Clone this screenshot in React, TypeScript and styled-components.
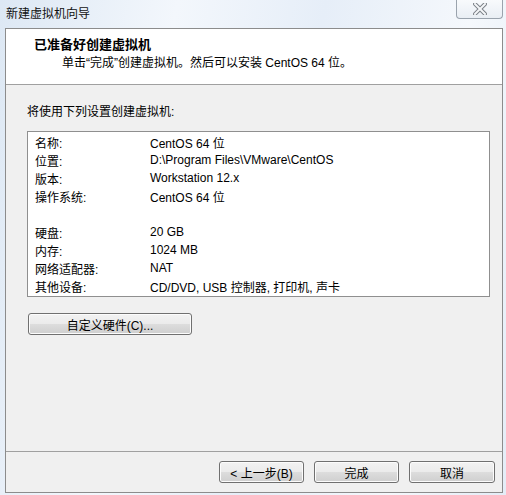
import React from 'react';
import styled, { createGlobalStyle } from 'styled-components';

const GlobalStyle = createGlobalStyle`
  html, body {
    margin: 0;
    padding: 0;
  }
  body {
    width: 506px;
    height: 495px;
    overflow: hidden;
    background: linear-gradient(100deg, #dde8f4 0%, #f3f7fc 30%, #e6eef8 55%, #f5f8fc 80%, #e4edf7 100%);
    font-family: "Liberation Sans", "Noto Sans CJK SC", sans-serif;
    font-size: 12px;
    color: #000;
  }
`;

const Frame = styled.div`
  display: flex;
  flex-direction: column;
  width: 506px;
  height: 495px;
`;

const TitleBar = styled.div`
  height: 28px;
  display: flex;
  align-items: flex-start;
  justify-content: space-between;
`;

const Title = styled.div`
  padding: 7px 0 0 6px;
  line-height: 14px;
  color: #111;
`;

const CloseButton = styled.div`
  width: 45px;
  height: 18px;
  margin-right: 3px;
  border: 1px solid #9aa3ad;
  border-top: none;
  border-radius: 0 0 4px 4px;
  background: linear-gradient(#f8fafc, #e9eef4);
  display: flex;
  align-items: center;
  justify-content: center;
`;

const Client = styled.div`
  margin-left: 5px;
  width: 496px;
  height: 463px;
  border: 1px solid #8c8c8c;
  background: #f0f0f0;
  display: flex;
  flex-direction: column;
`;

const Header = styled.div`
  height: 56px;
  background: #fff;
  border-bottom: 1px solid #a0a0a0;
  padding: 8px 0 0 28px;
  box-sizing: border-box;
`;

const Heading = styled.div`
  font-weight: bold;
  font-size: 13px;
  line-height: 16px;
`;

const Subtitle = styled.div`
  padding-left: 28px;
  line-height: 18px;
  margin-top: 1px;
`;

const Body = styled.div`
  flex: 1;
  padding: 18px 12px 0 21px;
`;

const Intro = styled.div`
  line-height: 18px;
`;

const SummaryBox = styled.div`
  margin-top: 10px;
  height: 166px;
  border: 1px solid #8f8f8f;
  background: #fff;
  padding: 1px 0 0 7px;
  box-sizing: border-box;
  display: grid;
  grid-template-columns: 115px 1fr;
  grid-auto-rows: 18px;
  align-items: center;
`;

const Cell = styled.div`
  white-space: nowrap;
`;

const Button = styled.button<{ $width: number }>`
  width: ${p => p.$width}px;
  height: 22px;
  padding: 0;
  border: 1px solid #707070;
  border-radius: 3px;
  background: linear-gradient(#f2f2f2 0%, #ebebeb 50%, #dddddd 50%, #cfcfcf 100%);
  box-shadow: inset 0 0 0 1px #fcfcfc;
  font-family: "Liberation Sans", "Noto Sans CJK SC", sans-serif;
  font-size: 12px;
  color: #000;
`;

const CustomRow = styled.div`
  margin-top: 16px;
  margin-left: 1px;
`;

const Footer = styled.div`
  height: 41px;
  border-top: 1px solid #a0a0a0;
  display: flex;
  justify-content: flex-end;
  align-items: flex-start;
  gap: 10px;
  padding: 9px 7px 0 0;
  box-sizing: border-box;
`;

const rows: [string, string][] = [
  ['名称:', 'CentOS 64 位'],
  ['位置:', 'D:\\Program Files\\VMware\\CentOS'],
  ['版本:', 'Workstation 12.x'],
  ['操作系统:', 'CentOS 64 位'],
  ['', ''],
  ['硬盘:', '20 GB'],
  ['内存:', '1024 MB'],
  ['网络适配器:', 'NAT'],
  ['其他设备:', 'CD/DVD, USB 控制器, 打印机, 声卡'],
];

const CloseIcon = () => (
  <svg width="14" height="12" viewBox="0 0 14 12">
    <path d="M2 1 L12 11 M12 1 L2 11" stroke="#7a7f86" strokeWidth="4" strokeLinecap="square" />
    <path d="M2 1 L12 11 M12 1 L2 11" stroke="#f4f6f8" strokeWidth="2" strokeLinecap="square" />
  </svg>
);

const App: React.FC = () => {
  return (
    <Frame>
      <GlobalStyle />
      <TitleBar>
        <Title>新建虚拟机向导</Title>
        <CloseButton><CloseIcon /></CloseButton>
      </TitleBar>
      <Client>
        <Header>
          <Heading>已准备好创建虚拟机</Heading>
          <Subtitle>单击“完成”创建虚拟机。然后可以安装 CentOS 64 位。</Subtitle>
        </Header>
        <Body>
          <Intro>将使用下列设置创建虚拟机:</Intro>
          <SummaryBox>
            {rows.map(([label, value], i) => (
              <React.Fragment key={i}>
                <Cell>{label}</Cell>
                <Cell>{value}</Cell>
              </React.Fragment>
            ))}
          </SummaryBox>
          <CustomRow>
            <Button $width={164}>自定义硬件(C)...</Button>
          </CustomRow>
        </Body>
        <Footer>
          <Button $width={85}>&lt; 上一步(B)</Button>
          <Button $width={85}>完成</Button>
          <Button $width={86}>取消</Button>
        </Footer>
      </Client>
    </Frame>
  );
};

export default App;
